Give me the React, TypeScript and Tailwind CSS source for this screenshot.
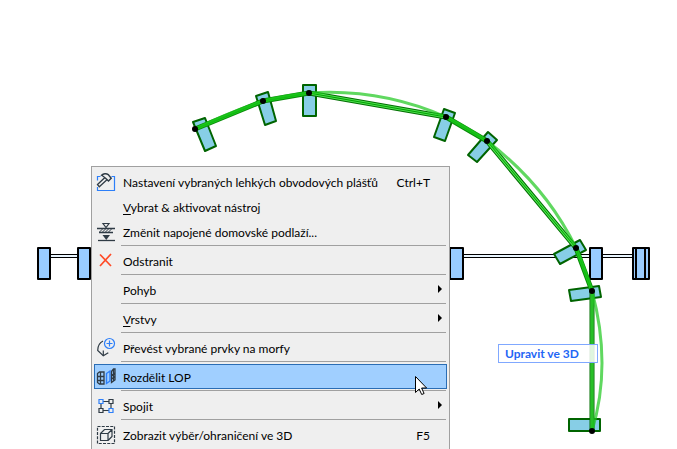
import type { ReactNode } from "react";

const dark = "#2f3b45";
const blue = "#2d7ff9";

function Glyph({ children }: { children?: ReactNode }) {
  return (
    <svg viewBox="0 0 28 23" className="h-[23px] w-7 shrink-0" fill="none" aria-hidden="true">
      {children}
    </svg>
  );
}

const SettingsIcon = (
  <Glyph>
    <path d="M5.500 6.500h-3v4M2.500 17v3.500h17v-14h-3" stroke={blue} strokeWidth="1.200" />
    <path d="M2.500 14.500L10.500 7l2 2.200-8.200 7.600z" fill="#efefef" stroke={dark} strokeWidth="1.300" />
    <path d="M6.500 5.200c1.800-1.600 4.900-2.100 6.700-.6l3 3.700-2.700 2.700-3.200-3c-1-1.100-2.200-1.700-3.800-2.800z" fill="#efefef" stroke={dark} strokeWidth="1.400" />
  </Glyph>
);

const StoryIcon = (
  <Glyph>
    <path d="M8 3.500h6l-3 4z" stroke={dark} strokeWidth="1.200" />
    <path d="M2 8.500h18M4 12.500h14" stroke={dark} strokeWidth="1.300" />
    <path d="M4.500 12l3-3M7.500 12l3-3M10.500 12l3-3M13.500 12l3-3" stroke={dark} />
    <path d="M7.500 15h7.500l-3.750 5z" fill={dark} />
    <path d="M3 20.500h17" stroke={dark} strokeWidth="1.300" />
  </Glyph>
);

const DeleteIcon = (
  <Glyph>
    <path d="M5 5.500l11 11.500M16 5l-11 12" stroke="#ff4a26" strokeWidth="1.700" />
  </Glyph>
);

const MorphIcon = (
  <Glyph>
    <path d="M8 5c-3 1.500-5.300 4.800-5.300 9.500l5.600 5.200 5-3" stroke={dark} strokeWidth="1.200" />
    <path d="M8.300 19.500v-5" stroke={dark} strokeWidth="1.200" />
    <circle cx="14.500" cy="7.500" r="5" fill="#efefef" stroke={blue} strokeWidth="1.200" />
    <path d="M14.500 4.500v6M11.500 7.500h6" stroke={blue} strokeWidth="1.200" />
  </Glyph>
);

const SplitIcon = (
  <Glyph>
    <path d="M2.500 8.500l2-1.500h4.500v12h-4.500l-2-1.500zM2.500 11.500h6.500M2.500 15.500h6.500M5.500 7v12" stroke={dark} strokeWidth="1.300" />
    <path d="M11.500 8.500l3.500-2.500v10l-3.500 2.500z" stroke={blue} strokeWidth="1.400" />
    <path d="M16.500 6.500l2-2.500h1.500v11l-3.500 2.500zM18.500 4.500v11M16.500 10.500l3.500-2.500M16.500 14l3.500-2.500" stroke={dark} strokeWidth="1.300" />
  </Glyph>
);

const JoinIcon = (
  <Glyph>
    <path d="M8 7.500h6M8 16.500h6M6 9v6M16 9v6" stroke={dark} strokeWidth="1.200" />
    <path d="M4 5.500h4v4h-4z" stroke={blue} strokeWidth="1.200" />
    <path d="M14 5.500h4v4h-4zM4 14.500h4v4h-4z" stroke={dark} strokeWidth="1.200" />
    <path d="M14 14.500h4v4h-4z" stroke={blue} strokeWidth="1.200" />
  </Glyph>
);

const BoundsIcon = (
  <Glyph>
    <rect x="2.500" y="3.500" width="17" height="17" stroke={dark} strokeWidth="1.200" strokeDasharray="3 1.250" />
    <path d="M5.500 10.500h7.500v7h-7.500zM5.500 10.500l4-4h7.500v7l-4 4M13 10.500l4-4" stroke={dark} strokeWidth="1.200" />
  </Glyph>
);

type Item = {
  label: ReactNode;
  icon?: ReactNode;
  shortcut?: string;
  submenu?: boolean;
  active?: boolean;
};

const groups: Item[][] = [
  [
    { label: "Nastavení vybraných lehkých obvodových plášťů", icon: SettingsIcon, shortcut: "Ctrl+T" },
    { label: <><u className="underline-offset-2">V</u>ybrat &amp; aktivovat nástroj</> },
    { label: "Změnit napojené domovské podlaží...", icon: StoryIcon },
  ],
  [{ label: "Odstranit", icon: DeleteIcon }],
  [{ label: "Pohyb", submenu: true }],
  [{ label: <><u className="underline-offset-2">V</u>rstvy</>, submenu: true }],
  [{ label: "Převést vybrané prvky na morfy", icon: MorphIcon }],
  [{ label: "Rozdělit LOP", icon: SplitIcon, active: true }],
  [{ label: "Spojit", icon: JoinIcon, submenu: true }],
  [{ label: "Zobrazit výběr/ohraničení ve 3D", icon: BoundsIcon, shortcut: "F5" }],
];

function MenuItem({ item }: { item: Item }) {
  return (
    <button
      type="button"
      role="menuitem"
      className={
        item.active
          ? "flex h-[25px] w-full items-center border border-[#2a6db5] bg-[#a0cfff] text-left"
          : "flex h-[25px] w-full items-center border border-transparent text-left"
      }
    >
      {item.icon ?? <Glyph />}
      <span className="flex-1 whitespace-nowrap pt-0.5">{item.label}</span>
      <span className="pt-0.5">{item.shortcut}</span>
      <span className="flex w-4 justify-center pb-0.5">
        {item.submenu && (
          <svg viewBox="0 0 4 8" className="ml-1 h-2 w-1" aria-hidden="true">
            <path d="M0 0l4 4-4 4z" fill="#000" />
          </svg>
        )}
      </span>
    </button>
  );
}

const nodes = [
  [195, 129], [263, 101], [309, 93], [446, 117], [487, 141], [576, 248], [592, 291], [592, 431],
];

const mullions = [
  "193,122 205,118 216,146 205,151",
  "256,96 268,92 276,121 265,125",
  "303,85 316,85 316,116 303,116",
  "444,109 455,113 445,141 434,137",
  "488,132 497,140 477,162 468,155",
  "580,240 586,250 560,264 554,254",
  "569,290 599,286 601,297 571,301",
  "569,419 600,419 600,431 569,431",
];

const arc =
  "M195 129Q228 113 263 101Q286 95 309 93Q380 88 446 117Q467 127 487 141Q546 186 576 248Q585 268 592 291Q612 365 592 431";

const longSpans = "M309 93L446 117M487 141L576 248M592 291V431";
const shortSpans = "M195 129L263 101L309 93M446 117L487 141M576 248L592 291";

function Drawing() {
  return (
    <svg width="677" height="449" viewBox="0 0 677 449" className="block max-w-none" aria-hidden="true">
      <g stroke="#000" fill="#eaf6ff" shapeRendering="crispEdges">
        <rect x="50.500" y="254.500" width="28" height="3" />
        <rect x="462.500" y="254.500" width="172" height="3" />
      </g>
      <g stroke="#000" strokeWidth="2" fill="#99ccff" strokeLinejoin="round">
        <rect x="38" y="248" width="12" height="31" />
        <rect x="78" y="248" width="12" height="31" />
        <rect x="450" y="248" width="13" height="31" />
        <rect x="590" y="248" width="12" height="31" />
        <rect x="633" y="248" width="16" height="31" />
        <path d="M636 248v31M645 248v31" />
      </g>
      <g stroke="#006400" strokeWidth="2" fill="#87cee6" strokeLinejoin="round">
        {mullions.map((points) => <polygon key={points} points={points} />)}
      </g>
      <g fill="none">
        <path d={longSpans} stroke="#006e00" strokeWidth="5" />
        <path d={longSpans} stroke="#4fe04f" strokeWidth="3" />
        <path d={longSpans} stroke="#00a000" strokeWidth="1" />
        <path d={shortSpans} stroke="#0a8a0a" strokeWidth="5" />
        <path d={shortSpans} stroke="#18c818" strokeWidth="3" />
        <path d={shortSpans} stroke="#009a00" strokeWidth="1" />
        <path d={arc} stroke="#1cc81c" strokeOpacity=".7" strokeWidth="3" />
      </g>
      {nodes.map(([x, y]) => <circle key={`${x}-${y}`} cx={x} cy={y} r="3" fill="#000" />)}
    </svg>
  );
}

export default function App() {
  return (
    <main className="relative h-screen overflow-hidden bg-white font-['Lato','Noto_Sans',sans-serif] text-xs text-black">
      <Drawing />
      <button
        type="button"
        className="absolute left-[498px] top-[344px] h-[19px] w-[100px] whitespace-nowrap border border-[#80a8ff] bg-white/85 pl-1.5 text-left font-bold text-[#1f66f5]"
      >
        Upravit ve 3D
      </button>
      <div
        role="menu"
        className="absolute left-[91px] top-[166px] w-[359px] border border-[#a0a0a0] bg-[#efefef] p-0.5 pb-4"
      >
        {groups.map((group, index) => (
          <div key={index} role="group">
            {index > 0 && <div role="separator" className="mt-px mb-0.5 ml-[27px] mr-px h-px bg-[#a0a0a0]" />}
            {group.map((item, row) => <MenuItem key={row} item={item} />)}
          </div>
        ))}
      </div>
      <svg viewBox="0 0 12 19" className="absolute left-[415px] top-[376px] h-[19px] w-3" aria-hidden="true">
        <path d="M.5.5v16l3.700-3.500 2.500 5.500 2.400-1-2.500-5.500h5z" fill="#fff" stroke="#000" />
      </svg>
    </main>
  );
}
